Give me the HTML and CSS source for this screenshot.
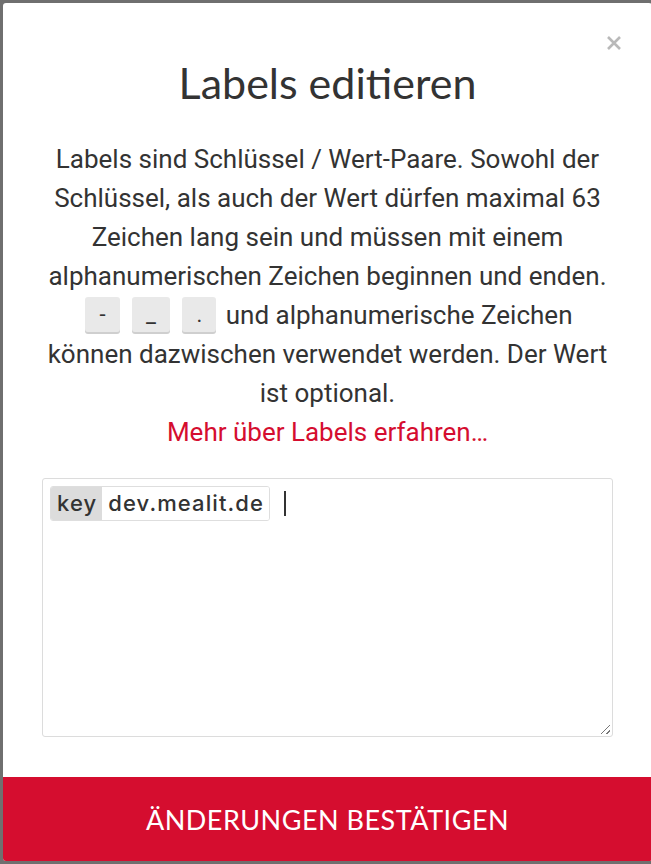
FILE: index.html
```html
<!DOCTYPE html>
<html lang="de">
<head>
<meta charset="utf-8">
<link rel="stylesheet" href="styles.css">
</head>
<body>
<div class="modal">
  <div class="modal-body">
    <button class="close" aria-label="Schließen">
      <svg width="16" height="16" viewBox="0 0 16 16"><path d="M2 2 L14 14 M14 2 L2 14" stroke="#b9b9b9" stroke-width="2.6" fill="none"/></svg>
    </button>
    <h1 class="title">Labels editieren</h1>
    <p class="desc">Labels sind Schlüssel / Wert-Paare. Sowohl der Schlüssel, als auch der Wert dürfen maximal 63 Zeichen lang sein und müssen mit einem alphanumerischen Zeichen beginnen und enden. <kbd>-</kbd> <kbd>_</kbd> <kbd>.</kbd> und alphanumerische Zeichen können dazwischen verwendet werden. Der Wert ist optional.</p>
    <a class="more" href="#">Mehr über Labels erfahren…</a>
    <div class="editor">
      <div class="chips">
        <span class="chip"><span class="chip-key">key</span><span class="chip-val">dev.mealit.de</span></span>
        <span class="caret"></span>
      </div>
      <span class="grip"></span>
    </div>
  </div>
  <button class="confirm">ÄNDERUNGEN BESTÄTIGEN</button>
</div>
</body>
</html>
```
FILE: styles.css
```css
html, body {
  margin: 0;
  height: 100%;
  overflow: hidden;
}
body {
  background: #6f6f6f;
  padding: 3px 0 0 3px;
  box-sizing: border-box;
}
.modal {
  width: 649px;
  height: 858px;
  background: #fff;
  border-radius: 3px;
  display: flex;
  flex-direction: column;
  overflow: hidden;
}
.modal-body {
  position: relative;
  flex: 1;
  padding: 53px 39px 0;
  display: flex;
  flex-direction: column;
  align-items: center;
}
.close {
  position: absolute;
  top: 29px;
  right: 27px;
  border: 0;
  background: none;
  padding: 0;
  width: 22px;
  height: 22px;
  display: flex;
  align-items: center;
  justify-content: center;
}
.title {
  margin: 0;
  font-family: Lato, sans-serif;
  font-weight: 400;
  font-size: 43px;
  line-height: 54px;
  color: #333;
}
.desc {
  margin: 30px 0 0;
  font-family: Roboto, sans-serif;
  font-size: 26px;
  line-height: 39px;
  color: #333;
  text-align: center;
}
kbd {
  display: inline-block;
  font-family: Roboto, sans-serif;
  font-size: 22px;
  line-height: 35px;
  padding: 0 14px;
  background: #e9e9e9;
  border-radius: 3px;
  box-shadow: 0 2px 0 #cfcfcf;
  color: #333;
  text-align: center;
  margin: 0 3px;
  vertical-align: 2px;
}
.more {
  font-family: Roboto, sans-serif;
  font-size: 26px;
  line-height: 39px;
  color: #d50d2f;
  text-decoration: none;
}
.editor {
  position: relative;
  box-sizing: border-box;
  margin-top: 26px;
  align-self: stretch;
  height: 259px;
  border: 1px solid #dcdcdc;
  border-radius: 3px;
  padding: 7px;
}
.chips {
  display: flex;
  align-items: center;
  gap: 14px;
}
.chip {
  display: inline-flex;
  border: 1px solid #dedede;
  border-radius: 3px;
  overflow: hidden;
  font-family: Inter, sans-serif;
  font-weight: 500;
  font-size: 22px;
  letter-spacing: 1.1px;
  line-height: 33px;
  color: #333;
}
.chip-key {
  background: #dcdcdc;
  padding: 0 5px 0 6px;
}
.chip-val {
  background: #fff;
  padding: 0 5px 0 6px;
}
.caret {
  width: 2px;
  height: 25px;
  background: #333;
}
.grip {
  position: absolute;
  right: 2px;
  bottom: 2px;
  width: 9px;
  height: 9px;
  background: linear-gradient(135deg, transparent 45%, #777 45%, #777 55%, transparent 55%, transparent 75%, #777 75%, #777 85%, transparent 85%);
}
.confirm {
  height: 84px;
  flex: none;
  border: 0;
  background: #d50d2f;
  color: #fff;
  font-family: Lato, sans-serif;
  font-size: 27px;
  letter-spacing: 0.5px;
}
```
